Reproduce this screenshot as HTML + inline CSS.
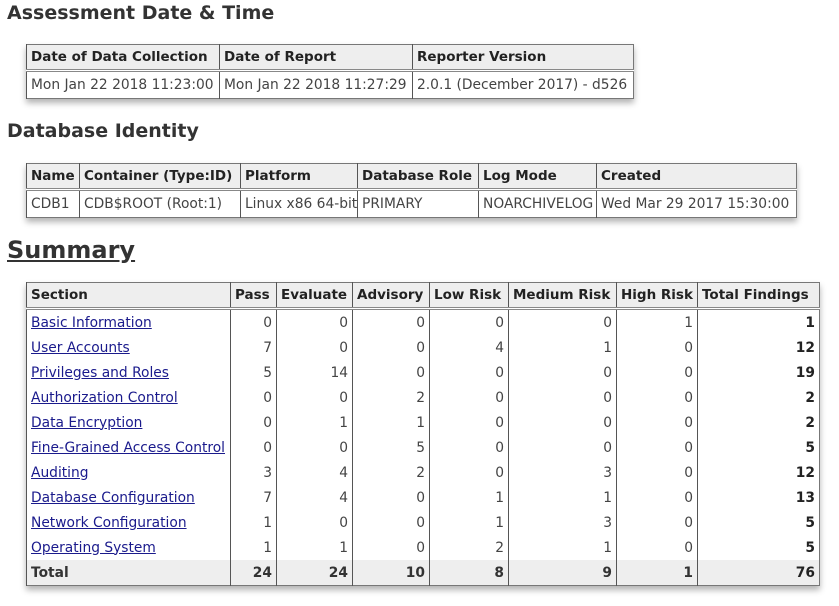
<!DOCTYPE html>
<html><head><meta charset="utf-8"><style>
body{margin:0;background:#fff;font-family:"DejaVu Sans","Liberation Sans",sans-serif;color:#333;}
h2{position:absolute;margin:0;font-size:19px;font-weight:bold;color:#333;left:7px;}
h1{position:absolute;margin:0;font-size:24px;font-weight:bold;color:#333;left:7px;text-decoration:underline;}
table{position:absolute;border-collapse:collapse;table-layout:fixed;font-size:13.8px;box-shadow:0 4px 6px rgba(0,0,0,.3);border:1px solid #777;}
th{background:#eee;text-align:left;font-weight:bold;font-size:13.5px;color:#222;padding:0 4px;border-left:1px solid #555;border-bottom:3px double #888;height:24px;white-space:nowrap;overflow:hidden;}
td{padding:0 4px;border-left:1px solid #555;height:25px;white-space:nowrap;color:#444;overflow:hidden;}
.t td{border-top:1px solid #777;height:26px;}
.s td{text-align:right;}
.s td:first-child{text-align:left;}
.s td:last-child{font-weight:bold;color:#222;}
a{color:#1a1a8c;text-decoration:underline;}
.tot td{background:#eee;font-weight:bold;color:#333;}
</style></head><body>
<h2 style="top:2px">Assessment Date &amp; Time</h2>
<table class="t" style="left:26px;top:44px;width:607px">
<colgroup><col style="width:193px"><col style="width:193px"><col style="width:221px"></colgroup>
<tr><th>Date of Data Collection</th><th>Date of Report</th><th>Reporter Version</th></tr>
<tr><td>Mon Jan 22 2018 11:23:00</td><td>Mon Jan 22 2018 11:27:29</td><td>2.0.1 (December 2017) - d526</td></tr>
</table>
<h2 style="top:120px">Database Identity</h2>
<table class="t" style="left:26px;top:163px;width:770px">
<colgroup><col style="width:53px"><col style="width:161px"><col style="width:117px"><col style="width:121px"><col style="width:118px"><col style="width:200px"></colgroup>
<tr><th>Name</th><th>Container (Type:ID)</th><th>Platform</th><th>Database Role</th><th>Log Mode</th><th>Created</th></tr>
<tr><td>CDB1</td><td>CDB$ROOT (Root:1)</td><td>Linux x86 64-bit</td><td>PRIMARY</td><td>NOARCHIVELOG</td><td>Wed Mar 29 2017 15:30:00</td></tr>
</table>
<h1 style="top:236px">Summary</h1>
<table class="s" style="left:26px;top:282px;width:793px">
<colgroup><col style="width:204px"><col style="width:46px"><col style="width:76px"><col style="width:77px"><col style="width:79px"><col style="width:108px"><col style="width:81px"><col style="width:122px"></colgroup>
<tr><th>Section</th><th>Pass</th><th>Evaluate</th><th>Advisory</th><th>Low Risk</th><th>Medium Risk</th><th>High Risk</th><th>Total Findings</th></tr>
<tr><td><a>Basic Information</a></td><td>0</td><td>0</td><td>0</td><td>0</td><td>0</td><td>1</td><td>1</td></tr>
<tr><td><a>User Accounts</a></td><td>7</td><td>0</td><td>0</td><td>4</td><td>1</td><td>0</td><td>12</td></tr>
<tr><td><a>Privileges and Roles</a></td><td>5</td><td>14</td><td>0</td><td>0</td><td>0</td><td>0</td><td>19</td></tr>
<tr><td><a>Authorization Control</a></td><td>0</td><td>0</td><td>2</td><td>0</td><td>0</td><td>0</td><td>2</td></tr>
<tr><td><a>Data Encryption</a></td><td>0</td><td>1</td><td>1</td><td>0</td><td>0</td><td>0</td><td>2</td></tr>
<tr><td><a>Fine-Grained Access Control</a></td><td>0</td><td>0</td><td>5</td><td>0</td><td>0</td><td>0</td><td>5</td></tr>
<tr><td><a>Auditing</a></td><td>3</td><td>4</td><td>2</td><td>0</td><td>3</td><td>0</td><td>12</td></tr>
<tr><td><a>Database Configuration</a></td><td>7</td><td>4</td><td>0</td><td>1</td><td>1</td><td>0</td><td>13</td></tr>
<tr><td><a>Network Configuration</a></td><td>1</td><td>0</td><td>0</td><td>1</td><td>3</td><td>0</td><td>5</td></tr>
<tr><td><a>Operating System</a></td><td>1</td><td>1</td><td>0</td><td>2</td><td>1</td><td>0</td><td>5</td></tr>
<tr class="tot"><td>Total</td><td>24</td><td>24</td><td>10</td><td>8</td><td>9</td><td>1</td><td>76</td></tr>
</table>
</body></html>
